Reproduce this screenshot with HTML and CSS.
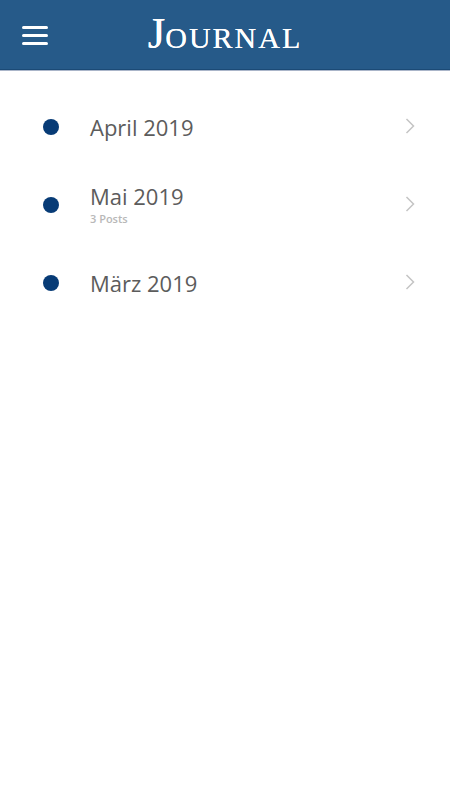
FILE: index.html
```html
<!DOCTYPE html>
<html lang="de">
<head>
  <meta charset="UTF-8" />
  <meta name="viewport" content="width=device-width, initial-scale=1.0" />
  <title>Journal</title>
  <link rel="stylesheet" href="styles.css">
</head>
<body>
  <header class="topbar">
    <div class="topbar-left">
      <button class="menu-button" aria-label="Menü">
        <span></span><span></span><span></span>
      </button>
    </div>
    <h1 class="brand"><span class="brand-initial">J</span>ournal</h1>
    <div class="topbar-right"></div>
  </header>

  <main>
    <ul class="month-list">
      <li class="month-row">
        <span class="month-dot"></span>
        <div class="month-text">
          <div class="month-name">April 2019</div>
        </div>
        <svg class="chevron" width="10" height="16" viewBox="0 0 10 16"><path d="M1.5 1 L8.5 8 L1.5 15" fill="none" stroke="#c4c4c4" stroke-width="1.5"/></svg>
      </li>
      <li class="month-row">
        <span class="month-dot"></span>
        <div class="month-text has-count">
          <div class="month-name">Mai 2019</div>
          <div class="month-count">3 Posts</div>
        </div>
        <svg class="chevron" width="10" height="16" viewBox="0 0 10 16"><path d="M1.5 1 L8.5 8 L1.5 15" fill="none" stroke="#c4c4c4" stroke-width="1.5"/></svg>
      </li>
      <li class="month-row">
        <span class="month-dot"></span>
        <div class="month-text">
          <div class="month-name">März 2019</div>
        </div>
        <svg class="chevron" width="10" height="16" viewBox="0 0 10 16"><path d="M1.5 1 L8.5 8 L1.5 15" fill="none" stroke="#c4c4c4" stroke-width="1.5"/></svg>
      </li>
    </ul>
  </main>
</body>
</html>
```

FILE: styles.css
```css
body {
  margin: 0;
  font-family: 'Open Sans', Arial, sans-serif;
  background-color: #fff;
}

.topbar {
  display: grid;
  grid-template-columns: 1fr auto 1fr;
  align-items: center;
  height: 69px;
  background-color: #265a89;
  border-bottom: 1px solid #1b4a76;
  box-shadow: 0 1px 0 #aab5c9;
}

.topbar-left {
  padding-left: 22px;
}

.menu-button {
  display: flex;
  flex-direction: column;
  gap: 5px;
  width: 26px;
  padding: 0;
  margin-top: 1px;
  background: none;
  border: none;
  cursor: pointer;
}

.menu-button span {
  display: block;
  height: 3px;
  background-color: #fff;
  border-radius: 2px;
}

.brand {
  margin: 0;
  margin-top: -3px;
  font-family: 'Liberation Serif', 'Times New Roman', serif;
  font-weight: normal;
  font-size: 30px;
  letter-spacing: 2px;
  text-transform: uppercase;
  color: #fff;
  line-height: 1;
  text-shadow: 0 0 0.5px #fff;
}

.brand-initial {
  font-size: 45px;
  letter-spacing: 0;
}

.month-list {
  list-style: none;
  margin: 0;
  padding: 18px 0 0;
}

.month-row {
  display: flex;
  align-items: center;
  height: 78px;
  padding: 0 35px 0 43px;
  cursor: pointer;
}

.month-dot {
  flex: none;
  width: 16px;
  height: 16px;
  border-radius: 50%;
  background-color: #073b76;
  margin-right: 31px;
}

.month-text {
  flex: 1;
}

.month-text.has-count {
  margin-top: -4px;
}

.month-name {
  font-size: 22px;
  line-height: 30px;
  color: #5c5c5c;
}

.month-count {
  font-size: 11px;
  font-weight: 600;
  line-height: 15px;
  color: #b8b8b8;
}

.chevron {
  flex: none;
  margin-top: -2px;
}
```
